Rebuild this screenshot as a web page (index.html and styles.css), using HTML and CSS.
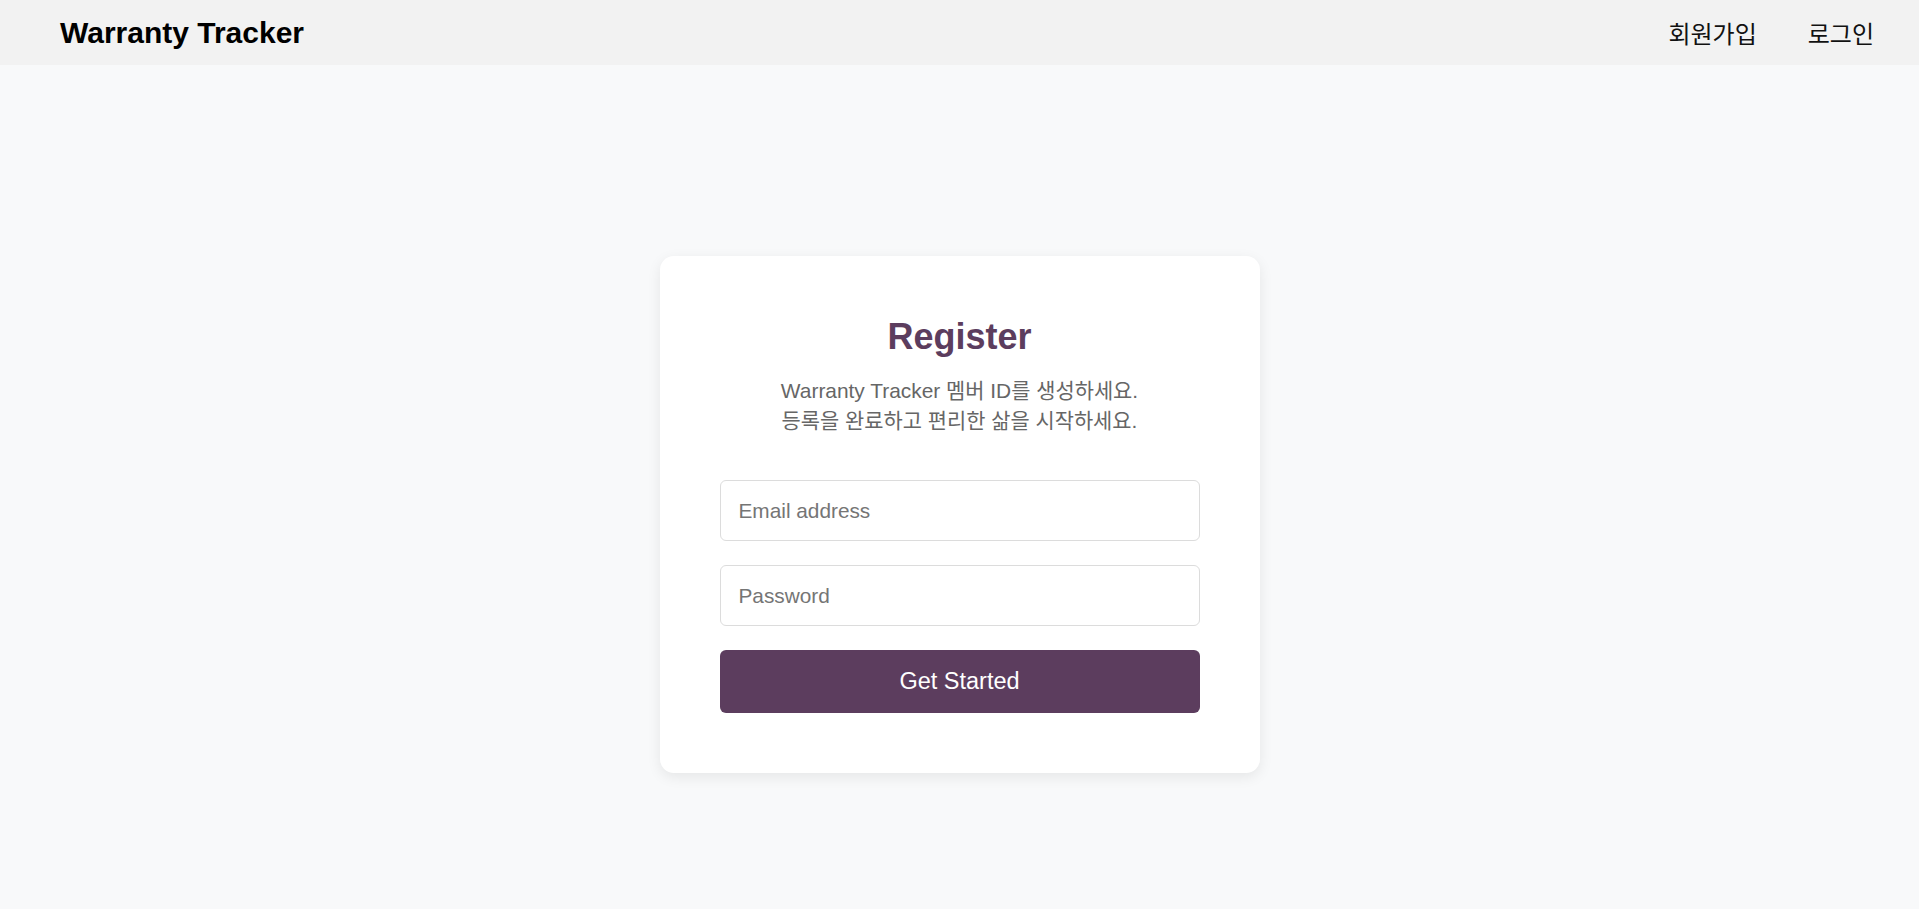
FILE: index.html
```html
<!DOCTYPE html>
<html lang="ko">
<head>
<meta charset="utf-8">
<title>Warranty Tracker - Register</title>
<link rel="stylesheet" href="styles.css">
</head>
<body>
<header class="topbar">
  <div class="brand">Warranty Tracker</div>
  <nav class="nav">
    <a class="nav-link" href="#">회원가입</a>
    <a class="nav-link" href="#">로그인</a>
  </nav>
</header>
<main class="main">
  <section class="card">
    <h2 class="card-title">Register</h2>
    <p class="card-sub">Warranty Tracker 멤버 ID를 생성하세요.<br>등록을 완료하고 편리한 삶을 시작하세요.</p>
    <form class="form">
      <input class="field" type="email" placeholder="Email address">
      <input class="field" type="password" placeholder="Password">
      <button class="btn" type="button">Get Started</button>
    </form>
  </section>
</main>
</body>
</html>
```

FILE: styles.css
```css
* { box-sizing: border-box; }

html, body {
  margin: 0;
  padding: 0;
}

body {
  background: #f8f9fa;
  font-family: "Liberation Sans", Arial, "Noto Sans CJK KR", sans-serif;
  color: #000;
  min-height: 909px;
}

.topbar {
  height: 65px;
  background: #f2f2f2;
  display: flex;
  align-items: center;
  justify-content: space-between;
  padding: 0 45px 0 60px;
}

.brand {
  font-size: 30px;
  font-weight: bold;
  color: #000;
  line-height: 1;
}

.nav {
  display: flex;
  gap: 51px;
  align-items: center;
}

.nav-link {
  font-family: "Noto Sans CJK KR", sans-serif;
  font-size: 24px;
  color: #111;
  text-decoration: none;
  line-height: 1;
}

.main {
  display: flex;
  justify-content: center;
  padding-top: 191px;
}

.card {
  width: 600px;
  background: #fff;
  border-radius: 14px;
  box-shadow: 0 4px 14px rgba(0, 0, 0, 0.08);
  padding: 60px;
  text-align: center;
}

.card-title {
  margin: 0 0 18px;
  font-size: 36px;
  line-height: 42px;
  font-weight: bold;
  color: #5c3d5e;
}

.card-sub {
  margin: 0 0 44px;
  font-size: 20.9px;
  line-height: 30px;
  color: #666;
}

.form {
  display: flex;
  flex-direction: column;
  gap: 24px;
}

.field {
  height: 61px;
  width: 100%;
  border: 1px solid #dcdcdc;
  border-radius: 6px;
  padding: 0 18px;
  font-family: "Liberation Sans", Arial, sans-serif;
  font-size: 20.8px;
  color: #333;
  background: #fff;
  outline: none;
}

.field::placeholder {
  color: #757575;
}

.btn {
  height: 63px;
  width: 100%;
  border: none;
  border-radius: 6px;
  background: #5c3d5e;
  color: #fff;
  font-family: "Liberation Sans", Arial, sans-serif;
  font-size: 23.5px;
  cursor: pointer;
}
```
